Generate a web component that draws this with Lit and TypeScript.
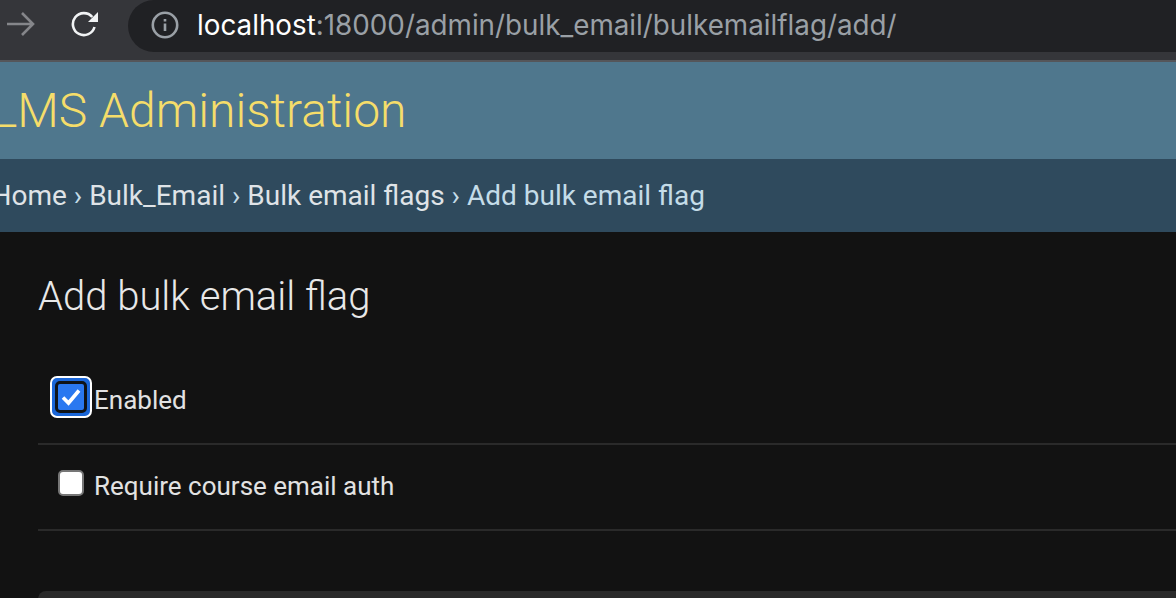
import { LitElement, html, css } from "lit";
import { customElement } from "lit/decorators.js";

@customElement("app-root")
export class AppRoot extends LitElement {
  static override styles = css`
    :host {
      display: block;
      width: 1176px;
      height: 598px;
      overflow: hidden;
      background: #121212;
      font-family: Roboto, "Liberation Sans", sans-serif;
    }
    .toolbar {
      height: 60px;
      box-sizing: border-box;
      background: #35363a;
      display: flex;
      align-items: flex-start;
      overflow: hidden;
    }
    .nav {
      width: 128px;
      flex: none;
      height: 48px;
      display: flex;
      align-items: center;
      padding-left: 7px;
      box-sizing: border-box;
      gap: 36px;
    }
    .omnibox {
      flex: 1;
      height: 52px;
      background: #202124;
      border-radius: 26px 0 0 26px;
      display: flex;
      align-items: center;
      padding: 0 0 2px 23px;
      box-sizing: border-box;
      gap: 18px;
      font-family: Inter, Roboto, sans-serif;
      font-size: 27.8px;
      color: #9aa0a6;
      white-space: nowrap;
    }
    .host {
      color: #fff;
    }
    .divider {
      height: 2px;
      background: #55565a;
    }
    .branding {
      height: 97px;
      background: #4f778d;
      display: flex;
      align-items: center;
      overflow: hidden;
      color: #f5dd6a;
      font-size: 48px;
      font-weight: 300;
      white-space: nowrap;
    }
    .branding span {
      margin-left: -8px;
    }
    .crumbs {
      height: 73px;
      background: #2f4a5d;
      display: flex;
      align-items: center;
      color: #c4dce8;
      font-size: 28px;
      white-space: nowrap;
      overflow: hidden;
    }
    .crumbs .inner {
      margin-left: -8.5px;
    }
    .crumbs a {
      color: #dfe3e7;
    }
    .content {
      padding: 0 0 0 38px;
    }
    h1 {
      margin: 0;
      padding-top: 40px;
      height: 87px;
      font-size: 40px;
      line-height: 50px;
      font-weight: 300;
      color: #e8e8e8;
    }
    .row {
      height: 86px;
      box-sizing: border-box;
      border-bottom: 2px solid #2a2a2a;
      display: flex;
      align-items: center;
      padding: 0 0 2px 12px;
      color: #e2e2e2;
      font-size: 26px;
      white-space: nowrap;
    }
    .box {
      width: 42px;
      height: 42px;
      flex: none;
      margin: 0 2px 7px 0;
      display: flex;
      align-items: center;
      justify-content: center;
    }
    .box svg {
      display: block;
    }
    .plain {
      width: 26px;
      height: 26px;
      box-sizing: border-box;
      background: #ffffff;
      border: 2px solid #767676;
      border-radius: 5px;
    }
    .focus {
      width: 42px;
      height: 42px;
      box-sizing: border-box;
      border-radius: 7px;
      background: #1a66d8;
      border: 2px solid #ffffff;
      display: flex;
      align-items: center;
      justify-content: center;
    }
    .gap {
      width: 32px;
      height: 32px;
      box-sizing: border-box;
      border: 3px solid #101418;
      border-radius: 5px;
      background: #2a78f0;
      display: flex;
      align-items: center;
      justify-content: center;
    }
    .submit {
      margin-top: 60px;
      height: 40px;
      background: #2a2a2a;
      border-radius: 8px 0 0 0;
    }
  `;

  override render() {
    return html`
      <div class="toolbar">
        <div class="nav">
          <svg width="28" height="28" viewBox="0 0 28 28" fill="none" stroke="#85868a" stroke-width="2.6">
            <path d="M0 14H25M15 3L26 14L15 25" />
          </svg>
          <svg width="28" height="28" viewBox="0 0 28 28" fill="none">
            <path d="M23.5 17a11 11 0 1 1-2.2-10" stroke="#f1f3f4" stroke-width="2.6" />
            <path d="M27 2V12H17Z" fill="#f1f3f4" />
          </svg>
        </div>
        <div class="omnibox">
          <svg width="28" height="28" viewBox="0 0 28 28" fill="none">
            <circle cx="14" cy="14" r="12.2" stroke="#9aa0a6" stroke-width="2.6" />
            <path d="M14 12.5V20M14 8V10.4" stroke="#9aa0a6" stroke-width="2.6" />
          </svg>
          <div><span class="host">localhost</span>:18000/admin/bulk_email/bulkemailflag/add/</div>
        </div>
      </div>
      <div class="divider"></div>
      <div class="branding"><span>LMS Administration</span></div>
      <div class="crumbs">
        <div class="inner">
          <a>Home</a> › <a>Bulk_Email</a> › <a>Bulk email flags</a> › Add bulk email flag
        </div>
      </div>
      <div class="content">
        <h1>Add bulk email flag</h1>
        <div class="row">
          <div class="box">
            <div class="focus">
              <div class="gap">
                <svg width="22" height="20" viewBox="0 0 22 20" fill="none" stroke="#fff" stroke-width="3.6">
                  <path d="M3 10.5L8.5 16L19 3.5" />
                </svg>
              </div>
            </div>
          </div>
          <span>Enabled</span>
        </div>
        <div class="row">
          <div class="box"><div class="plain"></div></div>
          <span>Require course email auth</span>
        </div>
        <div class="submit"></div>
      </div>
    `;
  }
}
